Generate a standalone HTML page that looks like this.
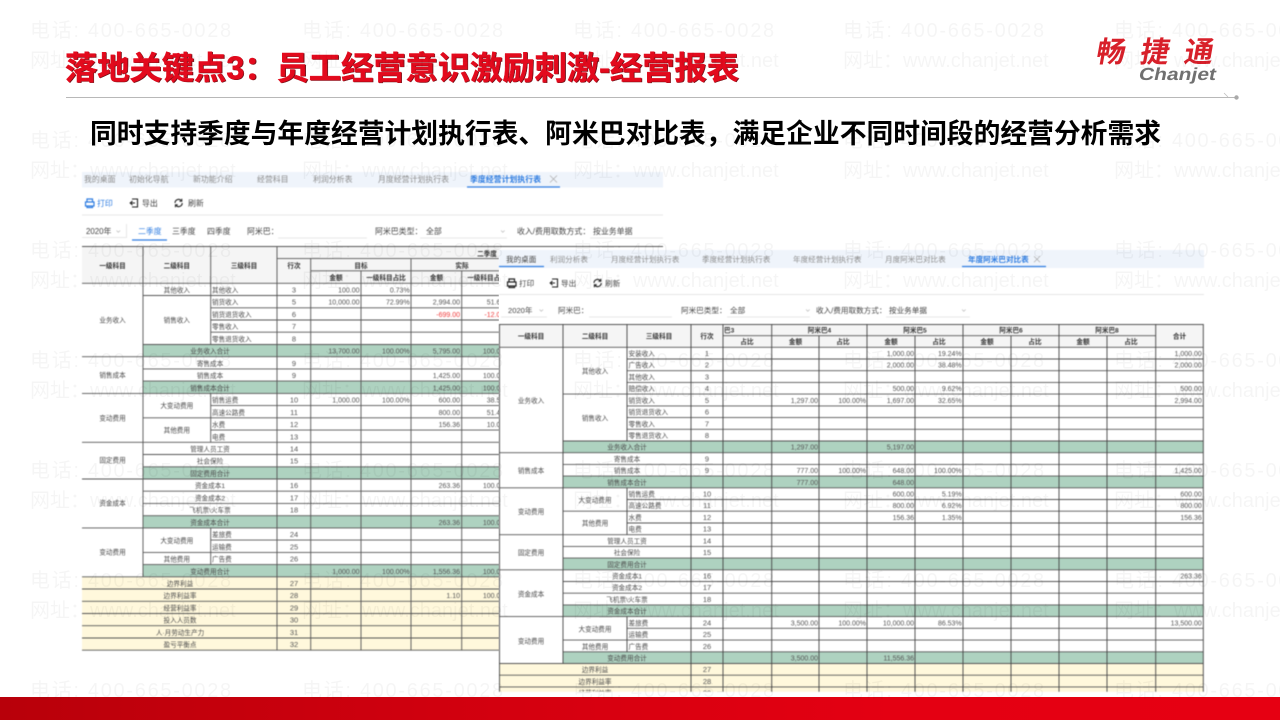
<!DOCTYPE html>
<html lang="zh-CN"><head><meta charset="utf-8"><title>落地关键点3</title>
<style>
html,body{margin:0;padding:0;background:#fff;width:1280px;height:720px;overflow:hidden}
svg{display:block}
text{font-family:"Liberation Sans","Noto Sans CJK SC",sans-serif}
.b{filter:blur(.4px)}
.t text{font-size:6.6px;fill:#4a4a4a}
.t .n{font-family:"Liberation Sans",sans-serif;font-size:7px;text-anchor:end;fill:#555}
.t .i{font-family:"Liberation Sans",sans-serif;font-size:7.5px;text-anchor:middle;fill:#555}
.t .c{text-anchor:middle}
.t .h{text-anchor:middle;font-weight:700;fill:#333}
.u text{font-size:7.6px;fill:#8c8c8c}
.u1 text{font-size:7.9px}
.u .d{fill:#444}
.u .bl{fill:#2f7de1;font-weight:700}
.u .bn{fill:#2f7de1}
.w text{font-size:20px;fill:#000;fill-opacity:.04}
.w .p{letter-spacing:1.7px}
</style></head><body>
<svg xmlns="http://www.w3.org/2000/svg" width="1280" height="720" viewBox="0 0 1280 720">
<defs>
<linearGradient id="bar" x1="0" x2="1" y1="0" y2="0"><stop offset="0" stop-color="#b8000a"/><stop offset=".4" stop-color="#d4000f"/><stop offset=".7" stop-color="#e40012"/><stop offset="1" stop-color="#e60012"/></linearGradient>
<clipPath id="clip2"><rect x="498" y="249" width="708" height="442.7"/></clipPath>
</defs>
<rect width="1280" height="720" fill="#fff"/>

<!-- WINDOW 1 -->
<g class="b">
<rect x="82" y="172" width="581" height="15.5" fill="#eff4fb"/>
<path d="M467 187H560" stroke="#2f7de1" stroke-width="1.2"/>
<path d="M550 175.500l7 7M557 175.500l-7 7" stroke="#aaa" stroke-width=".7"/>
<g class="u u1">
<text x="84" y="182">我的桌面</text><text x="129" y="182">初始化导航</text><text x="193" y="182">新功能介绍</text><text x="257" y="182">经营科目</text><text x="313" y="182">利润分析表</text><text x="378" y="182">月度经营计划执行表</text><text x="470" y="182" class="bl">季度经营计划执行表</text>
<text x="97" y="206" class="bn">打印</text><text x="142" y="206" class="d">导出</text><text x="188" y="206" class="d">刷新</text>
<text x="86" y="234" class="d">2020年</text><text x="138" y="234" class="bn">二季度</text><text x="172" y="234" class="d">三季度</text><text x="207" y="234" class="d">四季度</text><text x="247" y="234" class="d">阿米巴：</text><text x="375" y="234" class="d">阿米巴类型：</text><text x="426" y="234" class="d">全部</text><text x="517" y="234" class="d">收入/费用取数方式：</text><text x="593" y="234" class="d">按业务单据</text>
</g>
<!-- icons 1 -->
<g fill="none" stroke="#2f7de1" stroke-width="1.2"><path d="M87 202v-3h5.500v3M85.500 202h8.500v4h-8.500zM87 206v1.500h5.500V206"/></g>
<g fill="none" stroke="#222" stroke-width="1.100"><path d="M132 199h5.500v8H132M130 203h5M132.500 201l-2.300 2 2.300 2"/><path d="M175 203a3.600 3.600 0 0 1 6.300-2.400M182.200 203a3.600 3.600 0 0 1-6.300 2.400"/></g>
<path d="M181.800 198.800v2.400h-2.400M175.400 207.200v-2.400h2.400" fill="none" stroke="#222"/>
<path d="M82 215H663" stroke="#e6e6e6"/>
<path d="M116.500 230.500l1.800 1.800 1.800-1.800M501 230.500l1.800 1.800 1.800-1.800" fill="none" stroke="#bbb" stroke-width=".7"/>
<path d="M126.500 224V238M82 237.500H126M278 238H367M420 238H507M590 238H663" stroke="#e8e8e8"/>
<path d="M132 240H167" stroke="#2f7de1" stroke-width="1.200"/>

<!-- table 1 fills -->
<rect x="82" y="246" width="417" height="37.300" fill="#f5f5f5"/>
<g fill="#aed2c0"><rect x="143" y="344.500" width="356" height="12.200"/><rect x="143" y="381.100" width="356" height="12.300"/><rect x="143" y="466.800" width="356" height="12.200"/><rect x="143" y="515.700" width="356" height="12.200"/><rect x="143" y="564.600" width="356" height="12.200"/></g>
<rect x="82" y="576.800" width="417" height="73.400" fill="#fff8dc"/>
<!-- table 1 lines -->
<path fill="none" stroke="#555" stroke-width=".9" d="M82 246.500H663M277 258.600H499M310.700 270.800H499
M82 283.300H499M82 356.700H499M82 393.400H499M82 442.300H499M82 479H499M82 527.900H499M82 576.800H499M82 589H499M82 601.300H499M82 613.500H499M82 625.700H499M82 638H499M82 650.200H499
M143 295.500H499M143 344.500H499M143 368.900H499M143 381.100H499M143 417.800H499M143 454.500H499M143 466.800H499M143 491.200H499M143 503.400H499M143 515.700H499M143 552.400H499M143 564.600H499
M210.700 307.800H499M210.700 320H499M210.700 332.200H499M210.700 405.600H499M210.700 430.100H499M210.700 540.100H499"/>
<path fill="none" stroke="#555" stroke-width=".9" d="M143 246V576.800M210.700 246V344.500M210.700 393.400V442.300M210.700 527.900V564.600M277 246V650.200M310.700 258V650.200M361 270.800V650.200M411 258.600V650.200M461.700 270.800V650.200"/>
<g class="t">
<text x="112.500" y="268" class="h">一级科目</text><text x="176.800" y="268" class="h">二级科目</text><text x="244" y="268" class="h">三级科目</text><text x="294" y="268" class="h">行次</text>
<text x="487" y="256" class="h">二季度</text><text x="361" y="268" class="h">目标</text><text x="462" y="268" class="h">实际</text>
<text x="336" y="280" class="h">金额</text><text x="386" y="280" class="h">一级科目占比</text><text x="436.500" y="280" class="h">金额</text><text x="487" y="280" class="h">一级科目占比</text>
<text x="112.500" y="322.500" class="c">业务收入</text><text x="112.500" y="377.500" class="c">销售成本</text><text x="112.500" y="420.500" class="c">变动费用</text><text x="112.500" y="462.500" class="c">固定费用</text><text x="112.500" y="505.500" class="c">资金成本</text><text x="112.500" y="554.500" class="c">变动费用</text>
<text x="176.800" y="292.500" class="c">其他收入</text><text x="176.800" y="322.500" class="c">销售收入</text><text x="176.800" y="408" class="c">大变动费用</text><text x="176.800" y="432.500" class="c">其他费用</text><text x="176.800" y="543" class="c">大变动费用</text><text x="176.800" y="561.600" class="c">其他费用</text>
<text x="212" y="292.500">其他收入</text><text x="212" y="304.700">销货收入</text><text x="212" y="317">销货退货收入</text><text x="212" y="329.200">零售收入</text><text x="212" y="341.400">零售退货收入</text>
<text x="212" y="402.600">销售运费</text><text x="212" y="414.800">高速公路费</text><text x="212" y="427">水费</text><text x="212" y="439.300">电费</text><text x="212" y="537.100">差旅费</text><text x="212" y="549.300">运输费</text><text x="212" y="561.600">广告费</text>
<text x="210" y="353.700" class="c">业务收入合计</text><text x="210" y="365.900" class="c">寄售成本</text><text x="210" y="378.100" class="c">销售成本</text><text x="210" y="390.300" class="c">销售成本合计</text><text x="210" y="451.500" class="c">管理人员工资</text><text x="210" y="463.700" class="c">社会保险</text><text x="210" y="476" class="c">固定费用合计</text><text x="210" y="488.200" class="c">资金成本1</text><text x="210" y="500.400" class="c">资金成本2</text><text x="210" y="512.600" class="c">飞机票\火车票</text><text x="210" y="524.900" class="c">资金成本合计</text><text x="210" y="573.800" class="c">变动费用合计</text>
<text x="180" y="586" class="c">边界利益</text><text x="180" y="598.200" class="c">边界利益率</text><text x="180" y="610.500" class="c">经营利益率</text><text x="180" y="622.700" class="c">投入人员数</text><text x="180" y="634.900" class="c">人·月劳动生产力</text><text x="180" y="647.200" class="c">盈亏平衡点</text>
<text x="294" y="292.500" class="i">3</text><text x="294" y="304.700" class="i">5</text><text x="294" y="317" class="i">6</text><text x="294" y="329.200" class="i">7</text><text x="294" y="341.400" class="i">8</text><text x="294" y="365.900" class="i">9</text><text x="294" y="378.100" class="i">9</text><text x="294" y="402.600" class="i">10</text><text x="294" y="414.800" class="i">11</text><text x="294" y="427" class="i">12</text><text x="294" y="439.300" class="i">13</text><text x="294" y="451.500" class="i">14</text><text x="294" y="463.700" class="i">15</text><text x="294" y="488.200" class="i">16</text><text x="294" y="500.400" class="i">17</text><text x="294" y="512.600" class="i">18</text><text x="294" y="537.100" class="i">24</text><text x="294" y="549.300" class="i">25</text><text x="294" y="561.600" class="i">26</text><text x="294" y="586" class="i">27</text><text x="294" y="598.200" class="i">28</text><text x="294" y="610.500" class="i">29</text><text x="294" y="622.700" class="i">30</text><text x="294" y="634.900" class="i">31</text><text x="294" y="647.200" class="i">32</text>
<text x="359.500" y="292.500" class="n">100.00</text><text x="409.700" y="292.500" class="n">0.73%</text>
<text x="359.500" y="304.700" class="n">10,000.00</text><text x="409.700" y="304.700" class="n">72.99%</text><text x="460" y="304.700" class="n">2,994.00</text><text x="510.500" y="304.700" class="n">51.66%</text>
<text x="460" y="317" class="n" style="fill:#f03b3b">-699.00</text><text x="510.500" y="317" class="n" style="fill:#f03b3b">-12.06%</text>
<text x="359.500" y="353.700" class="n">13,700.00</text><text x="409.700" y="353.700" class="n">100.00%</text><text x="460" y="353.700" class="n">5,795.00</text><text x="510.500" y="353.700" class="n">100.00%</text>
<text x="460" y="378.100" class="n">1,425.00</text><text x="510.500" y="378.100" class="n">100.00%</text>
<text x="460" y="390.300" class="n">1,425.00</text><text x="510.500" y="390.300" class="n">100.00%</text>
<text x="359.500" y="402.600" class="n">1,000.00</text><text x="409.700" y="402.600" class="n">100.00%</text><text x="460" y="402.600" class="n">600.00</text><text x="510.500" y="402.600" class="n">38.55%</text>
<text x="460" y="414.800" class="n">800.00</text><text x="510.500" y="414.800" class="n">51.40%</text>
<text x="460" y="427" class="n">156.36</text><text x="510.500" y="427" class="n">10.05%</text>
<text x="460" y="488.200" class="n">263.36</text><text x="510.500" y="488.200" class="n">100.00%</text>
<text x="460" y="524.900" class="n">263.36</text><text x="510.500" y="524.900" class="n">100.00%</text>
<text x="359.500" y="573.800" class="n">1,000.00</text><text x="409.700" y="573.800" class="n">100.00%</text><text x="460" y="573.800" class="n">1,556.36</text><text x="510.500" y="573.800" class="n">100.00%</text>
<text x="460" y="598.200" class="n">1.10</text><text x="510.500" y="598.200" class="n">100.00%</text>
</g>
</g>

<!-- WINDOW 2 -->
<rect x="499" y="249" width="706" height="448" fill="#fff"/>
<g class="b">
<rect x="499" y="250" width="705" height="18" fill="#eff4fb"/>
<path d="M499 266.500H544M962 266.500H1046" stroke="#2f7de1" stroke-width="1.200"/>
<path d="M1034 256.200l6 6M1040 256.200l-6 6" stroke="#aaa" stroke-width=".7"/>
<g class="u">
<text x="506" y="262" class="d">我的桌面</text><text x="550" y="262">利润分析表</text><text x="611" y="262">月度经营计划执行表</text><text x="702" y="262">季度经营计划执行表</text><text x="793" y="262">年度经营计划执行表</text><text x="885" y="262">月度阿米巴对比表</text><text x="968" y="262" class="bl">年度阿米巴对比表</text>
<text x="519" y="286" class="d">打印</text><text x="561" y="286" class="d">导出</text><text x="605" y="286" class="d">刷新</text>
<text x="508" y="313" class="d">2020年</text><text x="558" y="313" class="d">阿米巴：</text><text x="681" y="313" class="d">阿米巴类型：</text><text x="730" y="313" class="d">全部</text><text x="816" y="313" class="d">收入/费用取数方式：</text><text x="889" y="313" class="d">按业务单据</text>
</g>
<g fill="none" stroke="#222" stroke-width="1.200"><path d="M509 282v-3h5.500v3M507.500 282h8.500v4h-8.500zM509 286v1.500h5.500V286"/></g>
<g fill="none" stroke="#222" stroke-width="1.100"><path d="M552 279h5.500v8H552M550 283h5M552.500 281l-2.300 2 2.300 2"/><path d="M594 283a3.600 3.600 0 0 1 6.300-2.400M601.200 283a3.600 3.600 0 0 1-6.300 2.400"/><path d="M600.800 278.800v2.400h-2.400M594.400 287.200v-2.400h2.400"/></g>
<path d="M499 294.500H1204" stroke="#e6e6e6"/>
<path d="M539.500 309.500l1.800 1.800 1.800-1.800M806 309.500l1.800 1.800 1.800-1.800M962 309.500l1.800 1.800 1.800-1.800" fill="none" stroke="#bbb" stroke-width=".7"/>
<path d="M501 317H547M589 317H672M727 317H810M886 317H970" stroke="#e8e8e8"/>

<g clip-path="url(#clip2)">
<rect x="499" y="324" width="704" height="23.300" fill="#f5f5f5"/>
<g fill="#aed2c0"><rect x="563" y="441" width="640" height="11.700"/><rect x="563" y="476.100" width="640" height="11.700"/><rect x="563" y="558.100" width="640" height="11.700"/><rect x="563" y="604.900" width="640" height="11.700"/><rect x="563" y="651.800" width="640" height="11.700"/></g>
<rect x="499.500" y="663.500" width="703.500" height="30" fill="#fff8dc"/>
<path fill="none" stroke="#555" stroke-width=".9" d="M499 324.500H1203.500M723 335.700H1155.700
M499 347.300H1203M499 452.700H1203M499 487.800H1203M499 534.700H1203M499 569.800H1203M499 616.600H1203M499 663.500H1203M499 675.200H1203M499 686.900H1203
M563 394.100H1203M563 441H1203M563 464.400H1203M563 476.100H1203M563 511.200H1203M563 546.400H1203M563 558.100H1203M563 581.500H1203M563 593.200H1203M563 604.900H1203M563 640.100H1203M563 651.800H1203
M627 359H1203M627 370.700H1203M627 382.400H1203M627 405.900H1203M627 417.600H1203M627 429.300H1203M627 499.500H1203M627 523H1203M627 628.300H1203"/>
<path fill="none" stroke="#444" stroke-width=".9" d="M499.500 324V692M563 324V663.500M627 324V441M627 487.800V534.700M627 616.600V651.800M691 324V692M723 324V692M771.700 324V692M819 335.700V692M867 324V692M915 335.700V692M963 324V692M1011 335.700V692M1059 324V692M1107 335.700V692M1155.700 324V692M1203.300 324V692"/>
<g class="t">
<text x="531" y="338.500" class="h">一级科目</text><text x="595" y="338.500" class="h">二级科目</text><text x="659" y="338.500" class="h">三级科目</text><text x="707" y="338.500" class="h">行次</text><text x="1179.500" y="338.500" class="h">合计</text>
<text x="724" y="332.500" style="font-weight:700;fill:#333">巴3</text><text x="819.500" y="332.500" class="h">阿米巴4</text><text x="915" y="332.500" class="h">阿米巴5</text><text x="1011" y="332.500" class="h">阿米巴6</text><text x="1107" y="332.500" class="h">阿米巴8</text>
<text x="747" y="344" class="h">占比</text><text x="795.500" y="344" class="h">金额</text><text x="843" y="344" class="h">占比</text><text x="891" y="344" class="h">金额</text><text x="939" y="344" class="h">占比</text><text x="987" y="344" class="h">金额</text><text x="1035" y="344" class="h">占比</text><text x="1083" y="344" class="h">金额</text><text x="1131" y="344" class="h">占比</text>
<text x="531" y="403" class="c">业务收入</text><text x="531" y="473" class="c">销售成本</text><text x="531" y="514" class="c">变动费用</text><text x="531" y="555" class="c">固定费用</text><text x="531" y="596.500" class="c">资金成本</text><text x="531" y="643.500" class="c">变动费用</text>
<text x="595" y="373.500" class="c">其他收入</text><text x="595" y="420.500" class="c">销售收入</text><text x="595" y="502.500" class="c">大变动费用</text><text x="595" y="525.500" class="c">其他费用</text><text x="595" y="631.500" class="c">大变动费用</text><text x="595" y="648.800" class="c">其他费用</text>
<text x="628.500" y="356">安装收入</text><text x="628.500" y="367.700">广告收入</text><text x="628.500" y="379.400">其他收入</text><text x="628.500" y="391.100">赔偿收入</text><text x="628.500" y="402.800">销货收入</text><text x="628.500" y="414.600">销货退货收入</text><text x="628.500" y="426.300">零售收入</text><text x="628.500" y="438">零售退货收入</text>
<text x="628.500" y="496.500">销售运费</text><text x="628.500" y="508.200">高速公路费</text><text x="628.500" y="519.900">水费</text><text x="628.500" y="531.700">电费</text><text x="628.500" y="625.300">差旅费</text><text x="628.500" y="637">运输费</text><text x="628.500" y="648.800">广告费</text>
<text x="627" y="449.700" class="c">业务收入合计</text><text x="627" y="461.400" class="c">寄售成本</text><text x="627" y="473.100" class="c">销售成本</text><text x="627" y="484.800" class="c">销售成本合计</text><text x="627" y="543.400" class="c">管理人员工资</text><text x="627" y="555.100" class="c">社会保险</text><text x="627" y="566.800" class="c">固定费用合计</text><text x="627" y="578.500" class="c">资金成本1</text><text x="627" y="590.200" class="c">资金成本2</text><text x="627" y="601.900" class="c">飞机票\火车票</text><text x="627" y="613.600" class="c">资金成本合计</text><text x="627" y="660.500" class="c">变动费用合计</text>
<text x="595" y="672.200" class="c">边界利益</text><text x="595" y="683.900" class="c">边界利益率</text><text x="595" y="695.600" class="c">经营利益率</text>
<text x="707" y="356" class="i">1</text><text x="707" y="367.700" class="i">2</text><text x="707" y="379.400" class="i">3</text><text x="707" y="391.100" class="i">4</text><text x="707" y="402.800" class="i">5</text><text x="707" y="414.600" class="i">6</text><text x="707" y="426.300" class="i">7</text><text x="707" y="438" class="i">8</text><text x="707" y="461.400" class="i">9</text><text x="707" y="473.100" class="i">9</text><text x="707" y="496.500" class="i">10</text><text x="707" y="508.200" class="i">11</text><text x="707" y="519.900" class="i">12</text><text x="707" y="531.700" class="i">13</text><text x="707" y="543.400" class="i">14</text><text x="707" y="555.100" class="i">15</text><text x="707" y="578.500" class="i">16</text><text x="707" y="590.200" class="i">17</text><text x="707" y="601.900" class="i">18</text><text x="707" y="625.300" class="i">24</text><text x="707" y="637" class="i">25</text><text x="707" y="648.800" class="i">26</text><text x="707" y="672.200" class="i">27</text><text x="707" y="683.900" class="i">28</text><text x="707" y="695.600" class="i">29</text>
<text x="914" y="356" class="n">1,000.00</text><text x="961.700" y="356" class="n">19.24%</text><text x="1201.800" y="356" class="n">1,000.00</text>
<text x="914" y="367.700" class="n">2,000.00</text><text x="961.700" y="367.700" class="n">38.48%</text><text x="1201.800" y="367.700" class="n">2,000.00</text>
<text x="914" y="391.100" class="n">500.00</text><text x="961.700" y="391.100" class="n">9.62%</text><text x="1201.800" y="391.100" class="n">500.00</text>
<text x="818" y="402.800" class="n">1,297.00</text><text x="866" y="402.800" class="n">100.00%</text><text x="914" y="402.800" class="n">1,697.00</text><text x="961.700" y="402.800" class="n">32.65%</text><text x="1201.800" y="402.800" class="n">2,994.00</text>
<text x="818" y="449.700" class="n">1,297.00</text><text x="914" y="449.700" class="n">5,197.00</text>
<text x="818" y="473.100" class="n">777.00</text><text x="866" y="473.100" class="n">100.00%</text><text x="914" y="473.100" class="n">648.00</text><text x="961.700" y="473.100" class="n">100.00%</text><text x="1201.800" y="473.100" class="n">1,425.00</text>
<text x="818" y="484.800" class="n">777.00</text><text x="914" y="484.800" class="n">648.00</text>
<text x="914" y="496.500" class="n">600.00</text><text x="961.700" y="496.500" class="n">5.19%</text><text x="1201.800" y="496.500" class="n">600.00</text>
<text x="914" y="508.200" class="n">800.00</text><text x="961.700" y="508.200" class="n">6.92%</text><text x="1201.800" y="508.200" class="n">800.00</text>
<text x="914" y="519.900" class="n">156.36</text><text x="961.700" y="519.900" class="n">1.35%</text><text x="1201.800" y="519.900" class="n">156.36</text>
<text x="1201.800" y="578.500" class="n">263.36</text>
<text x="818" y="625.300" class="n">3,500.00</text><text x="866" y="625.300" class="n">100.00%</text><text x="914" y="625.300" class="n">10,000.00</text><text x="961.700" y="625.300" class="n">86.53%</text><text x="1201.800" y="625.300" class="n">13,500.00</text>
<text x="818" y="660.500" class="n">3,500.00</text><text x="914" y="660.500" class="n">11,556.36</text>
</g>
</g>
</g>

<!-- HEADER -->
<g style="filter:blur(.25px)">
<text x="65.800" y="79.700" font-size="32" font-weight="700" fill="#6a0c12" stroke="#6a0c12" stroke-width=".4" textLength="674" lengthAdjust="spacingAndGlyphs">落地关键点3：员工经营意识激励刺激-经营报表</text>
<text x="65" y="79" font-size="32" font-weight="700" fill="#e30a1d" stroke="#e30a1d" stroke-width=".5" textLength="674" lengthAdjust="spacingAndGlyphs">落地关键点3：员工经营意识激励刺激-经营报表</text>
<text x="90" y="143" font-size="27" font-weight="700" fill="#000" textLength="1071" lengthAdjust="spacingAndGlyphs">同时支持季度与年度经营计划执行表、阿米巴对比表，满足企业不同时间段的经营分析需求</text>
</g>
<path d="M66 97.500H1236" stroke="#b8b8b8" stroke-width="1"/>
<circle cx="1236.500" cy="97.500" r="2.200" fill="#aaa"/>
<path d="M1224 93l4 4" stroke="#bbb" stroke-width=".7"/>
<!-- logo -->
<g style="filter:blur(.3px)">
<text transform="translate(1095 62) skewX(-10)" font-size="29" font-weight="700" fill="#d8202a" style="letter-spacing:15px">畅捷通</text>
<text transform="translate(1138 80) skewX(-12)" font-size="17.500" font-weight="700" fill="#707070" textLength="77" lengthAdjust="spacingAndGlyphs">Chanjet</text>
</g>

<!-- bottom bar -->
<rect x="0" y="697" width="1280" height="23" fill="url(#bar)"/>

<!-- WATERMARK -->
<g class="w">
<text x="30" y="37" class="p">电话: 400-665-0028</text><text x="302" y="37" class="p">电话: 400-665-0028</text><text x="573" y="37" class="p">电话: 400-665-0028</text><text x="843" y="37" class="p">电话: 400-665-0028</text><text x="1114" y="37" class="p">电话: 400-665-0028</text>
<text x="30" y="67">网址：www.chanjet.net</text><text x="302" y="67">网址：www.chanjet.net</text><text x="573" y="67">网址：www.chanjet.net</text><text x="843" y="67">网址：www.chanjet.net</text><text x="1114" y="67">网址：www.chanjet.net</text>
<text x="30" y="147" class="p">电话: 400-665-0028</text><text x="302" y="147" class="p">电话: 400-665-0028</text><text x="573" y="147" class="p">电话: 400-665-0028</text><text x="843" y="147" class="p">电话: 400-665-0028</text><text x="1114" y="147" class="p">电话: 400-665-0028</text>
<text x="30" y="177">网址：www.chanjet.net</text><text x="302" y="177">网址：www.chanjet.net</text><text x="573" y="177">网址：www.chanjet.net</text><text x="843" y="177">网址：www.chanjet.net</text><text x="1114" y="177">网址：www.chanjet.net</text>
<text x="30" y="257" class="p">电话: 400-665-0028</text><text x="302" y="257" class="p">电话: 400-665-0028</text><text x="573" y="257" class="p">电话: 400-665-0028</text><text x="843" y="257" class="p">电话: 400-665-0028</text><text x="1114" y="257" class="p">电话: 400-665-0028</text>
<text x="30" y="287">网址：www.chanjet.net</text><text x="302" y="287">网址：www.chanjet.net</text><text x="573" y="287">网址：www.chanjet.net</text><text x="843" y="287">网址：www.chanjet.net</text><text x="1114" y="287">网址：www.chanjet.net</text>
<text x="30" y="367" class="p">电话: 400-665-0028</text><text x="302" y="367" class="p">电话: 400-665-0028</text><text x="573" y="367" class="p">电话: 400-665-0028</text><text x="843" y="367" class="p">电话: 400-665-0028</text><text x="1114" y="367" class="p">电话: 400-665-0028</text>
<text x="30" y="397">网址：www.chanjet.net</text><text x="302" y="397">网址：www.chanjet.net</text><text x="573" y="397">网址：www.chanjet.net</text><text x="843" y="397">网址：www.chanjet.net</text><text x="1114" y="397">网址：www.chanjet.net</text>
<text x="30" y="477" class="p">电话: 400-665-0028</text><text x="302" y="477" class="p">电话: 400-665-0028</text><text x="573" y="477" class="p">电话: 400-665-0028</text><text x="843" y="477" class="p">电话: 400-665-0028</text><text x="1114" y="477" class="p">电话: 400-665-0028</text>
<text x="30" y="507">网址：www.chanjet.net</text><text x="302" y="507">网址：www.chanjet.net</text><text x="573" y="507">网址：www.chanjet.net</text><text x="843" y="507">网址：www.chanjet.net</text><text x="1114" y="507">网址：www.chanjet.net</text>
<text x="30" y="587" class="p">电话: 400-665-0028</text><text x="302" y="587" class="p">电话: 400-665-0028</text><text x="573" y="587" class="p">电话: 400-665-0028</text><text x="843" y="587" class="p">电话: 400-665-0028</text><text x="1114" y="587" class="p">电话: 400-665-0028</text>
<text x="30" y="617">网址：www.chanjet.net</text><text x="302" y="617">网址：www.chanjet.net</text><text x="573" y="617">网址：www.chanjet.net</text><text x="843" y="617">网址：www.chanjet.net</text><text x="1114" y="617">网址：www.chanjet.net</text>
<text x="30" y="697" class="p">电话: 400-665-0028</text><text x="302" y="697" class="p">电话: 400-665-0028</text><text x="573" y="697" class="p">电话: 400-665-0028</text><text x="843" y="697" class="p">电话: 400-665-0028</text><text x="1114" y="697" class="p">电话: 400-665-0028</text>
</g>
</svg>
</body></html>
